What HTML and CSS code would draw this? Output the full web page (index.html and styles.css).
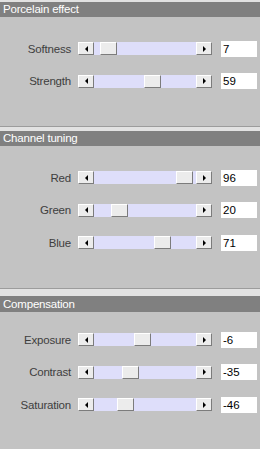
FILE: index.html
```html
<!DOCTYPE html>
<html>
<head>
<meta charset="utf-8">
<link rel="stylesheet" href="styles.css">
</head>
<body>
<section class="panel">
  <div class="head">Porcelain effect</div>
  <div class="rows">
    <div class="row"><span class="label">Softness</span><div class="slider"><span class="btn left"></span><div class="track"><span class="thumb" style="left:6px"></span></div><span class="btn right"></span></div><span class="val">7</span></div>
    <div class="row"><span class="label">Strength</span><div class="slider"><span class="btn left"></span><div class="track"><span class="thumb" style="left:50px"></span></div><span class="btn right"></span></div><span class="val">59</span></div>
  </div>
</section>
<section class="panel">
  <div class="head">Channel tuning</div>
  <div class="rows">
    <div class="row"><span class="label">Red</span><div class="slider"><span class="btn left"></span><div class="track"><span class="thumb" style="left:82px"></span></div><span class="btn right"></span></div><span class="val">96</span></div>
    <div class="row"><span class="label">Green</span><div class="slider"><span class="btn left"></span><div class="track"><span class="thumb" style="left:17px"></span></div><span class="btn right"></span></div><span class="val">20</span></div>
    <div class="row"><span class="label">Blue</span><div class="slider"><span class="btn left"></span><div class="track"><span class="thumb" style="left:60px"></span></div><span class="btn right"></span></div><span class="val">71</span></div>
  </div>
</section>
<section class="panel last">
  <div class="head">Compensation</div>
  <div class="rows">
    <div class="row"><span class="label">Exposure</span><div class="slider"><span class="btn left"></span><div class="track"><span class="thumb" style="left:40px"></span></div><span class="btn right"></span></div><span class="val">-6</span></div>
    <div class="row"><span class="label">Contrast</span><div class="slider"><span class="btn left"></span><div class="track"><span class="thumb" style="left:28px"></span></div><span class="btn right"></span></div><span class="val">-35</span></div>
    <div class="row"><span class="label">Saturation</span><div class="slider"><span class="btn left"></span><div class="track"><span class="thumb" style="left:23px"></span></div><span class="btn right"></span></div><span class="val">-46</span></div>
  </div>
</section>
</body>
</html>
```
FILE: styles.css
```css
html, body {
  margin: 0;
  padding: 0;
  background: #c3c3c3;
  height: 100%;
  overflow: hidden;
}
body {
  font-family: "Liberation Sans", Arial, sans-serif;
  font-size: 11.5px;
  letter-spacing: -0.2px;
}
.panel {
  border-top: 1px solid #9c9c9c;
}
.panel:first-child {
  border-top: 0;
}
.head {
  border-top: 4px solid #e2e2e2;
  background: #808080;
  color: #ffffff;
  height: 15px;
  line-height: 15px;
  padding-left: 3px;
  white-space: nowrap;
}
.panel:first-child .head {
  border-top-width: 2px;
}
.panel.last .head {
  border-top-width: 7px;
  height: 16px;
  line-height: 16px;
}
.rows {
  display: flex;
  flex-direction: column;
  gap: 16.5px;
  padding: 23.5px 0 37px 0;
}
.panel.last .rows {
  padding-top: 20px;
}
.row {
  display: flex;
  align-items: center;
  height: 16px;
}
.label {
  width: 71px;
  text-align: right;
  color: #3e3e3e;
  white-space: nowrap;
}
.slider {
  display: flex;
  margin-left: 7px;
  height: 13px;
  width: 134px;
}
.btn {
  width: 16px;
  height: 13px;
  box-sizing: border-box;
  background: #ececec;
  border-top: 1px solid #ffffff;
  border-left: 1px solid #ffffff;
  border-right: 1px solid #7c7c7c;
  border-bottom: 1px solid #7c7c7c;
  display: flex;
  align-items: center;
  justify-content: center;
}
.btn::before {
  content: "";
  display: block;
  width: 0;
  height: 0;
  border-top: 3px solid transparent;
  border-bottom: 3px solid transparent;
}
.btn.left::before {
  border-right: 3px solid #000000;
}
.btn.right::before {
  border-left: 3px solid #000000;
}
.track {
  flex: 1;
  position: relative;
  background: #dedefa;
}
.thumb {
  position: absolute;
  top: 0;
  width: 17px;
  height: 13px;
  box-sizing: border-box;
  background: #ececec;
  border-top: 1px solid #ffffff;
  border-left: 1px solid #ffffff;
  border-right: 1px solid #7c7c7c;
  border-bottom: 1px solid #7c7c7c;
}
.val {
  margin-left: 9px;
  width: 36px;
  height: 16px;
  box-sizing: border-box;
  background: #ffffff;
  color: #000000;
  padding-left: 2px;
  line-height: 16px;
  letter-spacing: 0;
}
```
